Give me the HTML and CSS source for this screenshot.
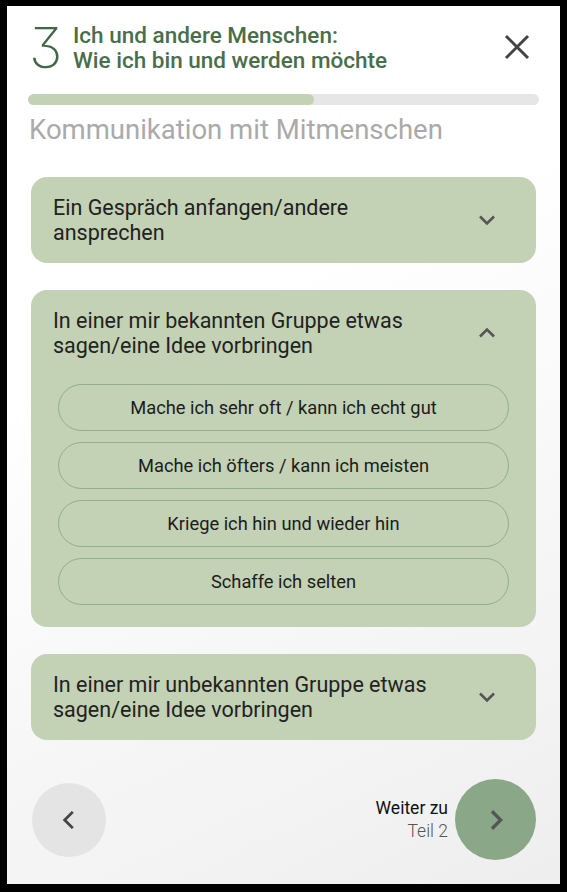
FILE: index.html
```html
<!DOCTYPE html>
<html lang="de">
<head>
<meta charset="utf-8">
<title>Kommunikation mit Mitmenschen</title>
<link rel="stylesheet" href="styles.css">
</head>
<body>
<div class="frame">
  <header class="header">
    <div class="chapter-no">3</div>
    <h1 class="chapter-title">Ich und andere Menschen:<br>Wie ich bin und werden möchte</h1>
    <button class="close" aria-label="Schließen">
      <svg viewBox="0 0 26 26" width="26" height="26"><path d="M2 2 L24 24 M24 2 L2 24" stroke="#444" stroke-width="3" fill="none"/></svg>
    </button>
  </header>

  <div class="progress"><div class="progress-fill" style="width:56%"></div></div>
  <h2 class="section-title">Kommunikation mit Mitmenschen</h2>

  <div class="list">
    <section class="card">
      <div class="card-head">
        <p class="card-title">Ein Gespräch anfangen/andere ansprechen</p>
        <svg class="chev" viewBox="0 0 24 24" width="24" height="24"><path d="M5 8.5 L12 15.5 L19 8.5" stroke="#555" stroke-width="2.6" fill="none"/></svg>
      </div>
    </section>

    <section class="card open">
      <div class="card-head">
        <p class="card-title">In einer mir bekannten Gruppe etwas sagen/eine Idee vorbringen</p>
        <svg class="chev" viewBox="0 0 24 24" width="24" height="24"><path d="M5 15.5 L12 8.5 L19 15.5" stroke="#555" stroke-width="2.6" fill="none"/></svg>
      </div>
      <div class="options">
        <button class="option">Mache ich sehr oft / kann ich echt gut</button>
        <button class="option">Mache ich öfters / kann ich meisten</button>
        <button class="option">Kriege ich hin und wieder hin</button>
        <button class="option">Schaffe ich selten</button>
      </div>
    </section>

    <section class="card">
      <div class="card-head">
        <p class="card-title">In einer mir unbekannten Gruppe etwas sagen/eine Idee vorbringen</p>
        <svg class="chev" viewBox="0 0 24 24" width="24" height="24"><path d="M5 8.5 L12 15.5 L19 8.5" stroke="#555" stroke-width="2.6" fill="none"/></svg>
      </div>
    </section>
  </div>

  <nav class="nav">
    <button class="back" aria-label="Zurück">
      <svg viewBox="0 0 24 24" width="26" height="26"><path d="M15.5 4.5 L8 12 L15.5 19.5" stroke="#444" stroke-width="2.6" fill="none"/></svg>
    </button>
    <div class="next-wrap">
      <div class="next-label"><span class="next-a">Weiter zu</span><span class="next-b">Teil 2</span></div>
      <button class="next" aria-label="Weiter">
        <svg viewBox="0 0 24 24" width="28" height="28"><path d="M8.5 4.5 L16 12 L8.5 19.5" stroke="#555" stroke-width="2.8" fill="none"/></svg>
      </button>
    </div>
  </nav>
</div>
</body>
</html>
```

FILE: styles.css
```css
* { box-sizing: border-box; }
html, body { margin: 0; padding: 0; }
body {
  width: 567px;
  height: 892px;
  font-family: Roboto, "Liberation Sans", sans-serif;
  background: #000;
}
.frame {
  width: 567px;
  height: 892px;
  border-style: solid;
  border-color: #000;
  border-width: 6px 7px 8px 7px;
  background: linear-gradient(155deg, #ffffff 0%, #ffffff 35%, #eeeeee 100%);
  padding: 0 21px 0 21px;
  display: flex;
  flex-direction: column;
}
.header {
  display: flex;
  align-items: flex-start;
  padding-top: 14px;
  height: 82px;
}
.chapter-no {
  font-family: Inter, Roboto, sans-serif;
  font-feature-settings: "cv09" 1;
  font-weight: 150;
  font-size: 56px;
  line-height: 56px;
  color: #3f6848;
  width: 45px;
  padding-left: 1px;
}
.chapter-title {
  margin: 3px 0 0 0;
  flex: 1;
  font-size: 22.5px;
  line-height: 25px;
  font-weight: 500;
  color: #4a6e4b;
}
.close {
  background: none;
  border: 0;
  padding: 0;
  margin: 14px 9px 0 0;
  width: 26px;
  height: 26px;
}
.progress {
  height: 11px;
  border-radius: 6px;
  background: #e6e6e6;
  overflow: hidden;
  margin-top: 6px;
}
.progress-fill {
  height: 100%;
  background: #c3d1b4;
  border-radius: 6px;
}
.section-title {
  margin: 9px 0 0 1px;
  font-size: 27.5px;
  line-height: 32px;
  font-weight: 400;
  color: #aaaaaa;
}
.list {
  display: flex;
  flex-direction: column;
  gap: 27px;
  margin: 31px 3px 0 3px;
}
.card {
  background: #c3d1b4;
  border-radius: 16px;
  padding: 18px 37px 18px 22px;
}
.card.open { padding-bottom: 22px; }
.card-head {
  display: flex;
  align-items: center;
  gap: 36px;
}
.card-title {
  margin: 0;
  flex: 1;
  font-size: 21.5px;
  line-height: 25px;
  color: #222;
}
.chev { flex: none; }
.options {
  display: flex;
  flex-direction: column;
  gap: 11px;
  margin: 26px -10px 0 5px;
}
.option {
  height: 47px;
  border: 1.5px solid #90af8c;
  border-radius: 24px;
  background: transparent;
  font-family: Roboto, "Liberation Sans", sans-serif;
  font-size: 18.3px;
  color: #1c1c1c;
  padding: 0;
}
.nav {
  margin-top: auto;
  margin-bottom: 24px;
  display: flex;
  justify-content: space-between;
  align-items: center;
  padding: 0 3px 0 4px;
}
.back {
  width: 74px;
  height: 74px;
  border-radius: 50%;
  border: 0;
  background: #e4e4e4;
  display: flex;
  align-items: center;
  justify-content: center;
  padding: 0;
}
.next-wrap {
  display: flex;
  align-items: center;
  gap: 7px;
}
.next-label {
  display: flex;
  flex-direction: column;
  align-items: flex-end;
  line-height: 23px;
  font-size: 17.5px;
}
.next-a { color: #111; font-weight: 400; }
.next-b { color: #555; font-weight: 300; }
.next {
  width: 81px;
  height: 81px;
  border-radius: 50%;
  border: 0;
  background: #8aa888;
  display: flex;
  align-items: center;
  justify-content: center;
  padding: 0;
}
```
